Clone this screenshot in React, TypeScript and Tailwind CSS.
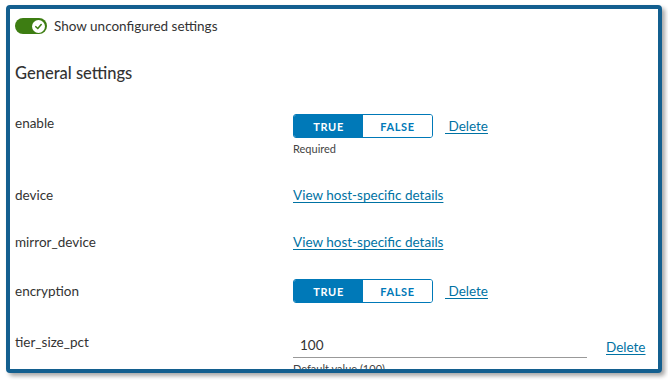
import React from "react";

const font = { fontFamily: "Lato, 'Noto Sans', sans-serif" };

function Segmented() {
  return (
    <div className="flex h-[24px] w-[140px] rounded-[3px] border border-[#0079b8] overflow-hidden text-[11px] font-bold tracking-[0.06em] leading-none">
      <div className="flex-1 flex items-center justify-center bg-[#0079b8] text-white">TRUE</div>
      <div className="flex-1 flex items-center justify-center bg-white text-[#0079b8]">FALSE</div>
    </div>
  );
}

function Del({ className = "" }: { className?: string }) {
  return (
    <a className={"text-[13.5px] text-[#0072a3] underline underline-offset-2 decoration-[#0072a3] " + className}>
      &nbsp;Delete
    </a>
  );
}

export default function App() {
  return (
    <div className="w-[668px] h-[380px] bg-white" style={font}>
      <div className="absolute left-[6px] top-[5px] w-[656px] h-[368px] border-[4px] border-[#135f8f] rounded-[4px] shadow-[3px_3px_4px_rgba(0,0,0,0.35)] bg-white overflow-hidden">
        <div className="pl-[5px] pt-[9px] text-[#333] text-[13.5px] leading-[20px]">
          <div className="flex items-center gap-[7px] h-[16px]">
            <div className="w-[32px] h-[16px] rounded-full bg-[#3d7d12] flex items-center justify-end pr-[2px]">
              <div className="w-[13px] h-[13px] rounded-full bg-white flex items-center justify-center">
                <svg width="9" height="9" viewBox="0 0 10 10">
                  <path d="M2 5.2 L4.2 7.3 L8 2.8" fill="none" stroke="#3d7d12" strokeWidth="1.7" strokeLinecap="round" strokeLinejoin="round" />
                </svg>
              </div>
            </div>
            <span className="text-[#333]">Show unconfigured settings</span>
          </div>
          <div className="mt-[28px] text-[16.5px] leading-[22px] font-medium text-[#333]">General settings</div>

          <div className="mt-[29px] flex">
            <div className="w-[278px]">enable</div>
            <div className="flex flex-col">
              <div className="flex items-center gap-[12px] mt-[1px]">
                <Segmented />
                <Del />
              </div>
              <div className="text-[11px] leading-[16px] mt-[3px] text-[#444]">Required</div>
            </div>
          </div>

          <div className="mt-[28px] flex items-center">
            <div className="w-[278px]">device</div>
            <a className="text-[#0072a3] underline underline-offset-2">View host-specific details</a>
          </div>

          <div className="mt-[27px] flex items-center">
            <div className="w-[278px]">mirror_device</div>
            <a className="text-[#0072a3] underline underline-offset-2">View host-specific details</a>
          </div>

          <div className="mt-[27px] flex items-center">
            <div className="w-[278px]">encryption</div>
            <div className="flex items-center gap-[12px]">
              <Segmented />
              <Del />
            </div>
          </div>

          <div className="mt-[26px] flex">
            <div className="w-[278px] pt-[3px]">tier_size_pct</div>
            <div className="flex flex-col">
              <div className="flex items-end">
                <div className="w-[294px] border-b border-[#999] pl-[7px] pb-[2px] pt-[6px]">100</div>
                <a className="ml-[19px] pb-[1px] text-[#0072a3] underline underline-offset-2">Delete</a>
              </div>
              <div className="text-[11px] leading-[16px] mt-[3px] text-[#444]">Default value (100)</div>
            </div>
          </div>
        </div>
      </div>
    </div>
  );
}
